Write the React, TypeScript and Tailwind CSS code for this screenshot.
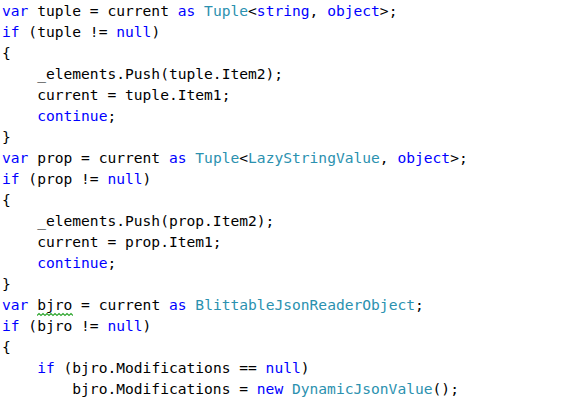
const K = "text-[#0000ff]";
const T = "text-[#2b91af]";

type Tok = [string, string?];

const lines: Tok[][] = [
  [["var", K], [" tuple = current "], ["as", K], [" "], ["Tuple", T], ["<"], ["string", K], [", "], ["object", K], [">;"]],
  [["if", K], [" (tuple != "], ["null", K], [")"]],
  [["{"]],
  [["    _elements.Push(tuple.Item2);"]],
  [["    current = tuple.Item1;"]],
  [["    "], ["continue", K], [";"]],
  [["}"]],
  [["var", K], [" prop = current "], ["as", K], [" "], ["Tuple", T], ["<"], ["LazyStringValue", T], [", "], ["object", K], [">;"]],
  [["if", K], [" (prop != "], ["null", K], [")"]],
  [["{"]],
  [["    _elements.Push(prop.Item2);"]],
  [["    current = prop.Item1;"]],
  [["    "], ["continue", K], [";"]],
  [["}"]],
  [["var", K], [" "], ["bjro", "squiggle"], [" = current "], ["as", K], [" "], ["BlittableJsonReaderObject", T], [";"]],
  [["if", K], [" (bjro != "], ["null", K], [")"]],
  [["{"]],
  [["    "], ["if", K], [" (bjro.Modifications == "], ["null", K], [")"]],
  [["        bjro.Modifications = "], ["new", K], [" "], ["DynamicJsonValue", T], ["();"]],
  [["    }  (                                   ("]],
];

function Token({ text, cls }: { text: string; cls?: string }) {
  if (cls === "squiggle") {
    return (
      <span className="relative">
        {text}
        <svg className="absolute left-0 top-[16px]" width="36" height="5" viewBox="0 0 36 5">
          <path
            d="M0 3.5 L2 1.5 L4 3.5 L6 1.5 L8 3.5 L10 1.5 L12 3.5 L14 1.5 L16 3.5 L18 1.5 L20 3.5 L22 1.5 L24 3.5 L26 1.5 L28 3.5 L30 1.5 L32 3.5 L34 1.5 L36 3.5"
            fill="none"
            stroke="#2ea62e"
            strokeWidth="1.1"
          />
        </svg>
      </span>
    );
  }
  return <span className={cls}>{text}</span>;
}

export default function App() {
  return (
    <div className="w-[585px] h-[403px] overflow-hidden bg-white">
      <pre className="pl-[2px] pt-0 font-['DejaVu_Sans_Mono',monospace] text-[14.6px] leading-[21px] text-black">
        {lines.map((line, i) => (
          <div key={i}>
            {line.map(([text, cls], j) => (
              <Token key={j} text={text} cls={cls} />
            ))}
          </div>
        ))}
      </pre>
    </div>
  );
}
